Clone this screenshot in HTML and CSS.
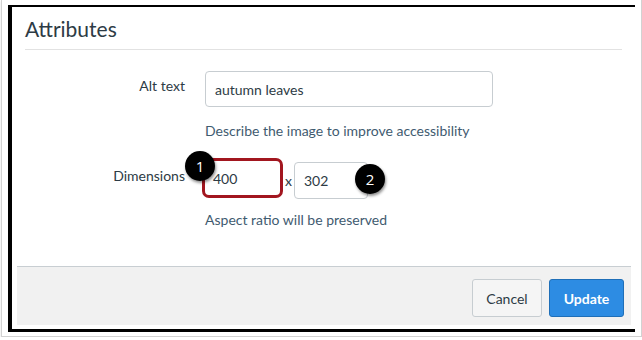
FILE: index.html
```html
<!DOCTYPE html>
<html>
<head>
<meta charset="utf-8">
<link rel="stylesheet" href="styles.css">
</head>
<body>
<div class="screen">
  <div class="frame">
    <div class="dialog">
      <div class="header"><h2 class="title">Attributes</h2></div>
      <div class="content">
        <div class="row row-alt">
          <label class="label">Alt text</label>
          <div class="field"><div class="input input-alt">autumn leaves</div></div>
        </div>
        <div class="help help-alt">Describe the image to improve accessibility</div>
        <div class="row row-dims">
          <label class="label">Dimensions</label>
          <div class="field dims">
            <div class="dim-wrap">
              <div class="input input-w">400</div>
              <span class="badge badge-1">1</span>
            </div>
            <span class="times">x</span>
            <div class="dim-wrap">
              <div class="input input-h">302</div>
              <span class="badge badge-2">2</span>
            </div>
          </div>
        </div>
        <div class="help help-dims">Aspect ratio will be preserved</div>
      </div>
      <div class="footer">
        <button class="btn btn-cancel">Cancel</button>
        <button class="btn btn-update">Update</button>
      </div>
    </div>
  </div>
</div>
</body>
</html>
```

FILE: styles.css
```css
* { box-sizing: border-box; }
html, body { margin: 0; padding: 0; background: #fff; }
body { font-family: Lato, "Open Sans", Arial, sans-serif; color: #2d3b45; }

.screen {
  width: 641px;
  height: 337px;
  margin-left: 1px;
  border: 1px solid #d2d2d2;
  border-top: none;
  box-shadow: 0 1px 2px rgba(0,0,0,0.12);
  background: #fff;
  padding: 5px 0 0 6px;
}

.frame {
  width: 627px;
  height: 327px;
  border-top: 2px solid #000;
  border-left: 4px solid #000;
  border-bottom: 3px solid #000;
  display: flex;
  flex-direction: column;
  padding: 0 0 4px 5px;
}

.dialog {
  width: 614px;
  flex: 1;
  display: flex;
  flex-direction: column;
}

.header {
  margin: 0 9px 0 8px;
  height: 43px;
  padding-top: 9px;
  border-bottom: 1px solid #e2e2e2;
}
.title {
  margin: 0;
  font-size: 21px;
  font-weight: 400;
  line-height: 25px;
  color: #2d3b45;
}

.content {
  display: flex;
  flex-direction: column;
  padding-top: 21px;
}

.row {
  display: grid;
  grid-template-columns: 168px 1fr;
  column-gap: 20px;
  align-items: start;
}
.label {
  text-align: right;
  font-size: 14px;
  line-height: 20px;
  padding-top: 5px;
  color: #2d3b45;
}
.row-dims .label { padding-top: 8px; }

.input {
  border: 1px solid #c7cdd1;
  border-radius: 4px;
  background: #fff;
  font-size: 14px;
  color: #2d3b45;
  display: flex;
  align-items: center;
}
.input-alt {
  width: 288px;
  height: 36px;
  padding-left: 9px;
}

.help {
  margin-left: 188px;
  font-size: 14px;
  line-height: 20px;
  color: #3f5b70;
}
.help-alt { margin-top: 14px; }
.row-dims { margin-top: 17px; }
.help-dims { margin-top: 11px; }

.dims {
  display: flex;
  align-items: flex-start;
  margin-left: -3px;
}
.dim-wrap { position: relative; }
.input-w {
  width: 81px;
  height: 40px;
  border: 3px solid #a2161f;
  border-radius: 7px;
  padding-left: 8px;
}
.input-h {
  width: 74px;
  height: 37px;
  margin-top: 4px;
  padding-left: 9px;
}
.times {
  font-size: 14px;
  line-height: 20px;
  margin: 13px 2px 0 2px;
  color: #2d3b45;
}

.badge {
  position: absolute;
  width: 30px;
  height: 30px;
  border-radius: 50%;
  background: #000;
  color: #fff;
  font-size: 15px;
  font-family: "Open Sans", Arial, sans-serif;
  display: flex;
  align-items: center;
  justify-content: center;
  box-shadow: 1px 2px 3px rgba(0,0,0,0.45);
}
.badge-1 { left: -17px; top: -7px; }
.badge-2 { left: 61px; top: 6px; }

.footer {
  margin-top: auto;
  height: 59px;
  background: #f1f1f1;
  border-top: 1px solid #c8ced2;
  display: flex;
  justify-content: flex-end;
  align-items: flex-start;
  padding: 12px 7px 0 0;
  gap: 7px;
}
.btn {
  height: 38px;
  border-radius: 3px;
  font-family: Lato, "Open Sans", Arial, sans-serif;
  font-size: 14px;
  padding: 0;
}
.btn-cancel {
  width: 70px;
  background: #f5f5f5;
  border: 1px solid #c7cdd1;
  color: #2d3b45;
}
.btn-update {
  width: 75px;
  background: #2d8ce3;
  border: 1px solid #1f6fb8;
  color: #fff;
  font-weight: 700;
}
```
